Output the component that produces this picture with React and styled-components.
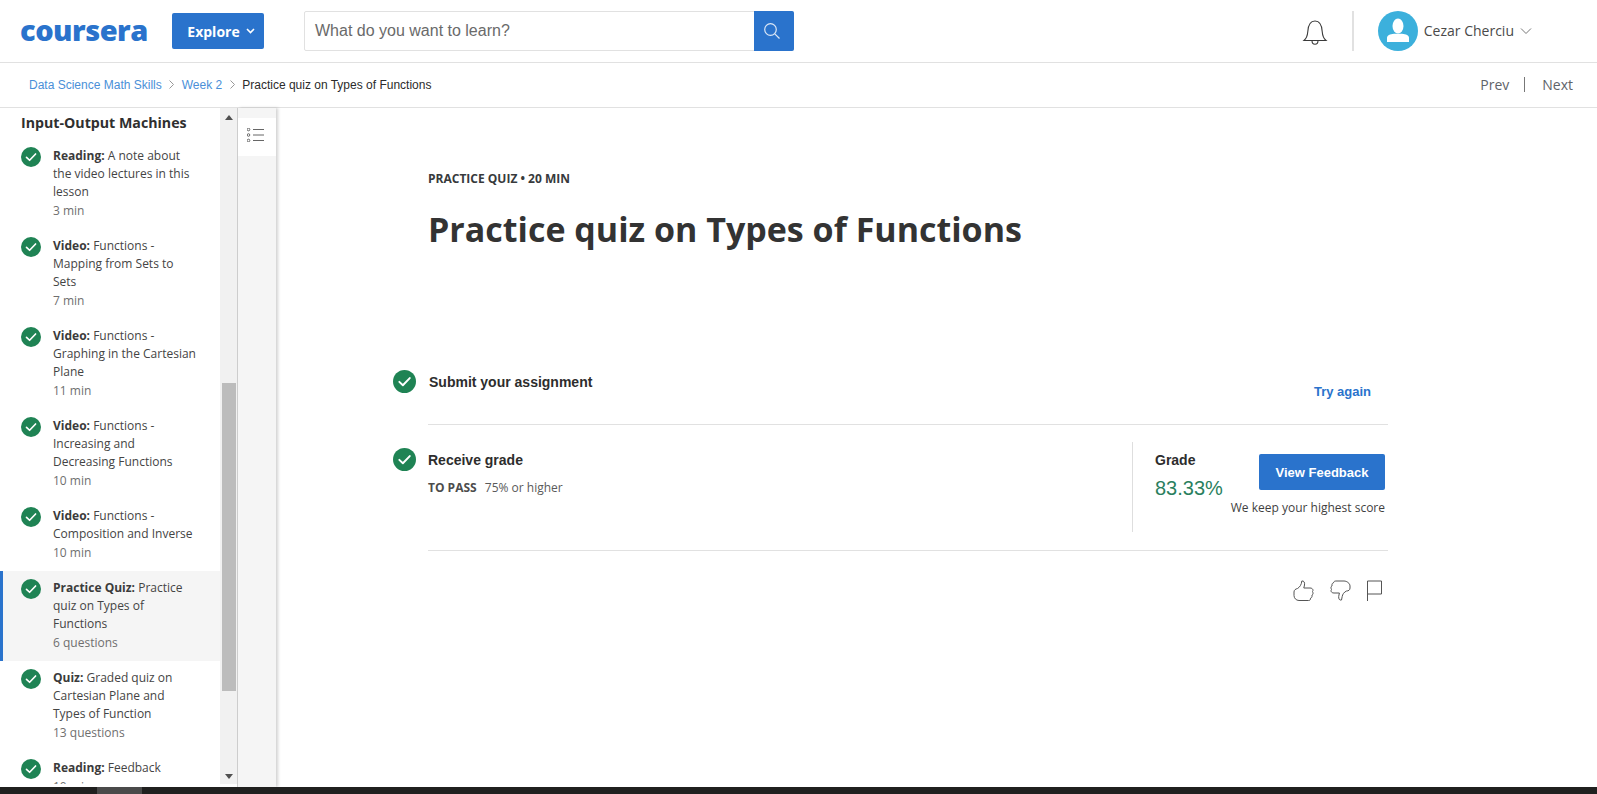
import React from "react";
import styled, { createGlobalStyle } from "styled-components";

const Global = createGlobalStyle`
  html, body { margin: 0; padding: 0; background: #fff; overflow: hidden; }
  * { box-sizing: border-box; }
  body { font-family: "Open Sans", sans-serif; color: #373a3c; }
`;

const Page = styled.div`
  width: 1597px; height: 794px; display: flex; flex-direction: column; overflow: hidden;
`;
const Header = styled.header`
  height: 63px; flex: none; display: flex; align-items: flex-start; border-bottom: 1px solid #e1e1e1; background: #fff;
`;
const Logo = styled.div`
  width: 128px; margin: 14px 0 0 20px; font: 800 29px/32px "Open Sans", sans-serif; letter-spacing: -0.5px; color: #2a73cc;
`;
const Explore = styled.button`
  width: 92px; height: 36px; margin: 13px 0 0 24px; padding: 0 0 0 6px; border: 0; border-radius: 2px; background: #2a73cc; color: #fff;
  font: 700 14px "Open Sans", sans-serif; display: flex; align-items: center; justify-content: center; gap: 6px;
`;
const Search = styled.div`
  width: 490px; height: 40px; margin: 11px 0 0 40px; display: flex; border: 1px solid #e1e1e1; border-radius: 2px;
`;
const SearchText = styled.div`
  flex: 1; padding-left: 10px; font: 16px/38px "Liberation Sans", sans-serif; color: #6a6a6a;
`;
const SearchButton = styled.div`
  width: 40px; margin: -1px -1px -1px 0; padding-right: 4px; background: #2a73cc; display: flex; align-items: center; justify-content: center; border-radius: 0 2px 2px 0;
`;
const BellWrap = styled.div`
  margin: 18px 0 0 auto; width: 26px; height: 28px;
`;
const HeaderRule = styled.div`
  width: 2px; height: 40px; margin: 11px 0 0 24px; background: #e1e1e1;
`;
const Avatar = styled.div`
  width: 40px; height: 40px; margin: 11px 0 0 24px; border-radius: 50%; background: #3cb0dc; overflow: hidden;
`;
const UserName = styled.div`
  margin: 21px 0 0 6px; font: 14px/20px "Open Sans", sans-serif; color: #4a4a4a;
`;
const UserChevron = styled.div`
  margin: 22px 65px 0 6px; width: 12px; height: 18px;
`;

const Crumbs = styled.nav`
  height: 45px; flex: none; display: flex; align-items: center; padding: 0 24px 1px 29px; border-bottom: 1px solid #e1e1e1; font: 12px "Liberation Sans", sans-serif;
`;
const CrumbLink = styled.span` color: #4a8fd8; `;
const CrumbHere = styled.span` color: #2b2b2b; `;
const CrumbSep = styled.span`
  width: 20px; display: flex; justify-content: center; align-items: center;
`;
const Pager = styled.div`
  margin-left: auto; display: flex; align-items: center; font: 14px "Open Sans", sans-serif; color: #5f6368;
`;
const PagerBar = styled.span`
  width: 1px; height: 15px; margin: 0 17px 0 15px; background: #777;
`;

const Body = styled.div`
  flex: 1; min-height: 0; display: flex;
`;
const Sidebar = styled.aside`
  width: 238px; flex: none; display: flex; align-items: flex-start; border-right: 1px solid #cfcfcf;
`;
const Outline = styled.div`
  width: 220px; height: 676px; flex: none; overflow: hidden; background: #fff; padding-top: 3px;
`;
const Week = styled.h3`
  margin: 0 0 4.4px 21px; font: 700 14.2px/24px "Open Sans", sans-serif; color: #2f2f2f; height: 24px;
`;
const Item = styled.div`
  display: flex; padding: 8px 22px 9px 21px;
  background: ${(p) => (p.$active ? "#f5f5f5" : "transparent")};
  box-shadow: ${(p) => (p.$active ? "inset 3px 0 0 #2a73cc" : "none")};
`;
const ItemCheck = styled.div`
  width: 20px; height: 20px; flex: none; margin: 0 12px 0 0;
`;
const ItemText = styled.div`
  font: 12px/18px "Open Sans", sans-serif; color: #444;
  b { font-weight: 700; color: #3b3b3b; }
`;
const ItemMeta = styled.div`
  font: 12px/18px "Open Sans", sans-serif; color: #6f6f6f; margin-top: 1px;
`;
const Scrollbar = styled.div`
  width: 17px; height: 676px; flex: none; background: #f1f1f1; display: flex; flex-direction: column; align-items: center;
`;
const Arrow = styled.div`
  width: 0; height: 0; border-left: 4px solid transparent; border-right: 4px solid transparent;
  ${(p) => (p.$up ? "border-bottom: 5px solid #505050; margin-top: 7px;" : "border-top: 5px solid #505050; margin-top: 83px;")}
`;
const Thumb = styled.div`
  width: 14px; height: 308px; margin-top: 263px; background: #bcbcbc;
`;
const Rail = styled.div`
  width: 38px; flex: none; background: #f5f5f5; box-shadow: 2px 0 3px rgba(0,0,0,.18);
`;
const RailTab = styled.div`
  height: 38px; margin-top: 10px; background: #fff; display: flex; align-items: center; justify-content: center; padding: 0 4px 4px 0;
`;
const Main = styled.main`
  flex: 1; padding: 63px 0 0 117px;
`;
const Eyebrow = styled.div`
  margin-left: 35px; font: 700 12px/16px "Open Sans", sans-serif; color: #373a3c;
`;
const Title = styled.h1`
  margin: 18px 0 0 35px; font: 700 34px/48px "Open Sans", sans-serif; color: #333;
`;
const SubmitRow = styled.section`
  width: 995px; height: 53px; margin-top: 118px; display: flex;
`;
const Check = styled.div`
  width: 23px; height: 23px; flex: none; margin: -1px ${(p) => p.$gap}px 0 0;
`;
const RowTitle = styled.div`
  font: 700 14px/20px "Liberation Sans", sans-serif; color: #2d2d2d; margin-top: 1px;
`;
const TryAgain = styled.div`
  margin: 11px 17px 0 auto; font: 700 13px/20px "Liberation Sans", sans-serif; color: #2a73cc;
`;
const Rule = styled.hr`
  width: 960px; height: 1px; margin: 0 0 0 35px; border: 0; background: #e1e1e1;
`;
const GradeRow = styled.section`
  width: 995px; height: 125px; display: flex;
`;
const GradeLeft = styled.div`
  flex: 1; padding-top: 24px; display: flex;
`;
const Pass = styled.div`
  margin-top: 9px; font: 12px/18px "Open Sans", sans-serif; color: #5a5a5a;
  b { font-weight: 700; color: #4c4c4c; margin-right: 5px; }
`;
const GradeRight = styled.div`
  width: 256px; margin: 17px 0 18px; padding: 0 3px 0 22px; border-left: 1px solid #dedede; display: flex; position: relative;
`;
const GradeValue = styled.div`
  width: 80px; padding-top: 8px;
`;
const GradeLabel = styled.div`
  font: 700 14px/20px "Liberation Sans", sans-serif; color: #2d2d2d;
`;
const Percent = styled.div`
  margin-top: 6px; font: 20px/24px "Liberation Sans", sans-serif; color: #2a7f5e;
`;
const GradeAction = styled.div`
  margin-left: auto; margin-top: 12px; display: flex; flex-direction: column; align-items: flex-end;
`;
const Feedback = styled.button`
  width: 126px; height: 36px; border: 0; padding: 0; border-radius: 2px; background: #2a73cc; color: #fff; font: 700 13px "Liberation Sans", sans-serif;
`;
const Keep = styled.div`
  margin: 9px 0 0 -40px; white-space: nowrap; font: 12px/18px "Open Sans", sans-serif; color: #3f3f3f;
`;
const Actions = styled.div`
  width: 995px; margin-top: 29px; display: flex; justify-content: flex-end; gap: 16px; padding-right: 6px;
`;
const Taskbar = styled.div`
  height: 7px; flex: none; background: #20201f; display: flex;
`;
const TaskItem = styled.div`
  width: 45px; margin-left: 97px; background: #4a4a4a;
`;

const CheckCircle = () => (
  <svg width="100%" height="100%" viewBox="0 0 24 24" aria-hidden="true">
    <circle cx="12" cy="12" r="12" fill="#1f8354" />
    <path d="M6.600 12.400l3.700 3.500 7.200-7.500" fill="none" stroke="#fff" strokeWidth="2" strokeLinecap="round" strokeLinejoin="round" />
  </svg>
);

const items = [
  ["Reading:", "A note about the video lectures in this lesson", "3 min"],
  ["Video:", "Functions - Mapping from Sets to Sets", "7 min"],
  ["Video:", "Functions - Graphing in the Cartesian Plane", "11 min"],
  ["Video:", "Functions - Increasing and Decreasing Functions", "10 min"],
  ["Video:", "Functions - Composition and Inverse", "10 min"],
  ["Practice Quiz:", "Practice quiz on Types of Functions", "6 questions", true],
  ["Quiz:", "Graded quiz on Cartesian Plane and Types of Function", "13 questions"],
  ["Reading:", "Feedback", "10 min"],
];

export default function App() {
  return (
    <Page>
      <Global />
      <Header>
        <Logo>coursera</Logo>
        <Explore>
          Explore
          <svg width="9" height="6" viewBox="0 0 9 6"><path d="M1 1l3.500 3.500L8 1" fill="none" stroke="#fff" strokeWidth="1.6" /></svg>
        </Explore>
        <Search>
          <SearchText>What do you want to learn?</SearchText>
          <SearchButton>
            <svg width="16" height="16" viewBox="0 0 16 16"><circle cx="6.500" cy="6.500" r="5.800" fill="none" stroke="#dbe7f6" strokeWidth="1.200" /><path d="M10.800 10.800L15.500 15.500" stroke="#dbe7f6" strokeWidth="1.200" /></svg>
          </SearchButton>
        </Search>
        <BellWrap>
          <svg width="26" height="28" viewBox="0 0 26 28" fill="none" stroke="#3a3a3a" strokeWidth="1.100"><path d="M2 22.500c3-2.500 3.500-5 3.800-9C6.200 7 9 3 13 3s6.800 4 7.200 10.500c.3 4 .8 6.500 3.800 9z" /><path d="M10 22.500c0 5 6 5 6 0" /></svg>
        </BellWrap>
        <HeaderRule />
        <Avatar>
          <svg width="40" height="40" viewBox="0 0 40 40" fill="#fff"><ellipse cx="20" cy="15" rx="5.500" ry="7.500" /><path d="M9 27c0-2.500 3-4 7-4.200h8c4 .2 7 1.700 7 4.200v4H9z" /></svg>
        </Avatar>
        <UserName>Cezar Cherciu</UserName>
        <UserChevron>
          <svg width="12" height="18" viewBox="0 0 12 18"><path d="M1 6.500l5 5 5-5" fill="none" stroke="#777" strokeWidth="1" /></svg>
        </UserChevron>
      </Header>
      <Crumbs>
        <CrumbLink>Data Science Math Skills</CrumbLink>
        <CrumbSep><svg width="5" height="9" viewBox="0 0 5 9"><path d="M.5.500l4 4-4 4" fill="none" stroke="#999" /></svg></CrumbSep>
        <CrumbLink>Week 2</CrumbLink>
        <CrumbSep><svg width="5" height="9" viewBox="0 0 5 9"><path d="M.5.500l4 4-4 4" fill="none" stroke="#999" /></svg></CrumbSep>
        <CrumbHere>Practice quiz on Types of Functions</CrumbHere>
        <Pager>Prev<PagerBar />Next</Pager>
      </Crumbs>
      <Body>
        <Sidebar>
          <Outline>
            <Week>Input-Output Machines</Week>
            {items.map(([kind, text, meta, active]) => (
              <Item key={text} $active={active}>
                <ItemCheck><CheckCircle /></ItemCheck>
                <div>
                  <ItemText><b>{kind}</b> {text}</ItemText>
                  <ItemMeta>{meta}</ItemMeta>
                </div>
              </Item>
            ))}
          </Outline>
          <Scrollbar>
            <Arrow $up />
            <Thumb />
            <Arrow />
          </Scrollbar>
        </Sidebar>
        <Rail>
          <RailTab>
            <svg width="17" height="14" viewBox="0 0 17 14" fill="none" stroke="#666" strokeWidth="1"><circle cx="1.500" cy="1.500" r="1.300" /><circle cx="1.500" cy="7" r="1.300" /><circle cx="1.500" cy="12.500" r="1.300" /><path d="M6 1.500h11M6 7h11M6 12.500h11" /></svg>
          </RailTab>
        </Rail>
        <Main>
          <Eyebrow>PRACTICE QUIZ • 20 MIN</Eyebrow>
          <Title>Practice quiz on Types of Functions</Title>
          <SubmitRow>
            <Check $gap={13}><CheckCircle /></Check>
            <RowTitle>Submit your assignment</RowTitle>
            <TryAgain>Try again</TryAgain>
          </SubmitRow>
          <Rule />
          <GradeRow>
            <GradeLeft>
              <Check $gap={12}><CheckCircle /></Check>
              <div>
                <RowTitle>Receive grade</RowTitle>
                <Pass><b>TO PASS</b> 75% or higher</Pass>
              </div>
            </GradeLeft>
            <GradeRight>
              <GradeValue>
                <GradeLabel>Grade</GradeLabel>
                <Percent>83.33%</Percent>
              </GradeValue>
              <GradeAction>
                <Feedback>View Feedback</Feedback>
                <Keep>We keep your highest score</Keep>
              </GradeAction>
            </GradeRight>
          </GradeRow>
          <Rule />
          <Actions>
            <svg width="21" height="21" viewBox="0 0 21 21" fill="none" stroke="#555" strokeWidth="1"><path d="M1 12c0-2 1.500-3 3.500-3.500C7 7 8.500 4.500 8.800 1c2-.5 3.200 1.500 2.700 4L10.800 8H17c3 0 3.500 2.500 2.500 3.500 1 2 .5 3-.5 3.500.3 2-.5 3-1.500 3.200.2 2-1 2.300-2 2.300H6C3 20.500 1 18 1 15.500z" /></svg>
            <svg width="21" height="21" viewBox="0 0 21 21" fill="none" stroke="#555" strokeWidth="1"><path d="M20 8c0 2-1.500 3-3.500 3-2.500 1-4 3.500-4.300 5.500l-.7 3.500c-2 .5-3-1-2.800-3.500l.7-3.500H4C1 13 .5 10.500 1.500 9.500.5 7.500 1 6.500 2 6c-.3-2 .5-3 1.500-3.200C3.500 1.500 5 1 6 1h8c3 0 6 2.500 6 5z" /></svg>
            <svg width="15" height="21" viewBox="0 0 15 21" fill="none" stroke="#555" strokeWidth="1"><path d="M.5 21V1h14v13H.5" /></svg>
          </Actions>
        </Main>
      </Body>
      <Taskbar><TaskItem /></Taskbar>
    </Page>
  );
}
